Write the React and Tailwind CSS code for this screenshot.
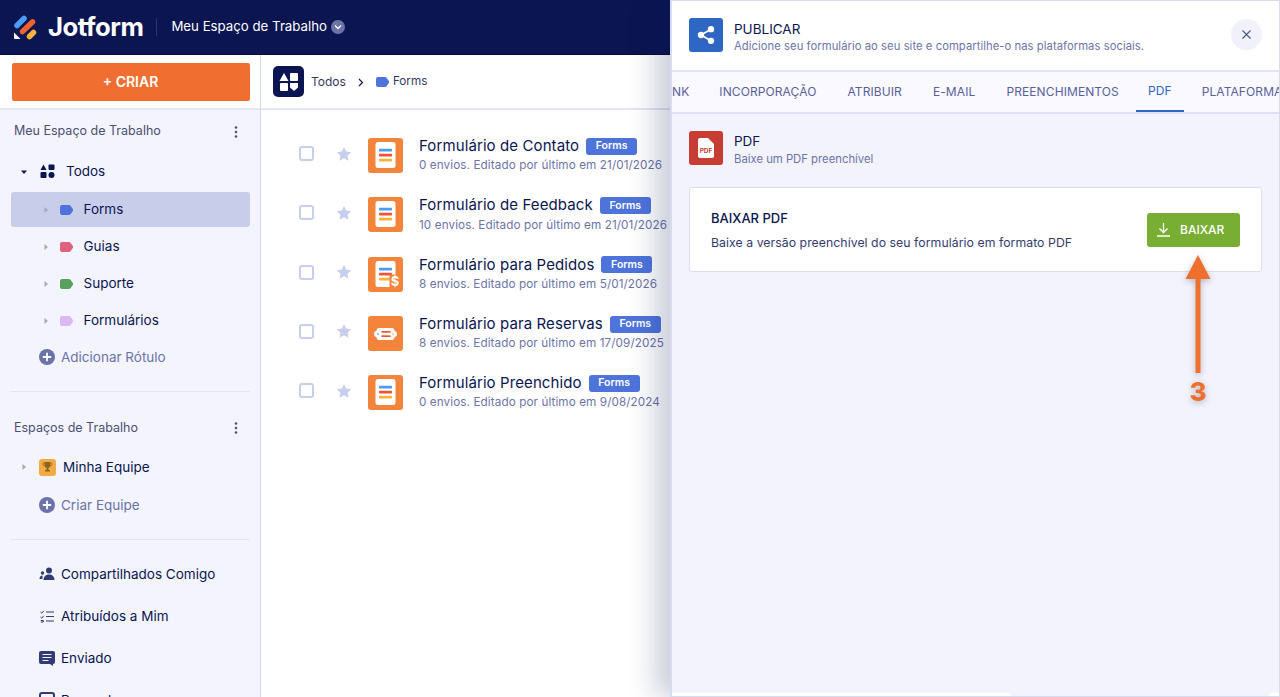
import { X } from 'lucide-react';

const labels = [
  { name: 'Forms', color: 'text-[#4e74dc]', active: true },
  { name: 'Guias', color: 'text-[#e0607e]' },
  { name: 'Suporte', color: 'text-[#58a15f]' },
  { name: 'Formulários', color: 'text-[#dcb8f5]' },
];

const forms = [
  { title: 'Formulário de Contato', meta: '0 envios. Editado por último em 21/01/2026', icon: 'doc' },
  { title: 'Formulário de Feedback', meta: '10 envios. Editado por último em 21/01/2026', icon: 'doc' },
  { title: 'Formulário para Pedidos', meta: '8 envios. Editado por último em 5/01/2026', icon: 'pay' },
  { title: 'Formulário para Reservas', meta: '8 envios. Editado por último em 17/09/2025', icon: 'ticket' },
  { title: 'Formulário Preenchido', meta: '0 envios. Editado por último em 9/08/2024', icon: 'doc' },
];

const tabs = [
  { name: 'NK', className: 'pr-[13px] mr-[4px]' },
  { name: 'INCORPORAÇÃO', className: 'px-[13px] mr-[5px]' },
  { name: 'ATRIBUIR', className: 'px-[13px] mr-[5px]' },
  { name: 'E-MAIL', className: 'px-[13px] mr-[5px]' },
  { name: 'PREENCHIMENTOS', className: 'px-[13px] mr-[4px]' },
  { name: 'PDF', className: 'px-[12px] mr-[5px] text-[#2d66c3] border-b-2 border-[#2d66c3]' },
  { name: 'PLATAFORMAS', className: 'px-[13px]' },
];

function Caret({ open }) {
  return (
    <svg width="8" height="8" viewBox="0 0 8 8" className="shrink-0">
      {open ? <path d="M1 2.500h6L4 6z" fill="#0a1551" /> : <path d="M2.500 1v6L6 4z" fill="#a5a8b8" />}
    </svg>
  );
}

function Tag() {
  return (
    <svg width="13" height="10" viewBox="0 0 13 10" className="block">
      <path d="M2 0h7a2 2 0 0 1 1.500.7L13 4.200a1.300 1.300 0 0 1 0 1.600l-2.500 3.500A2 2 0 0 1 9 10H2a2 2 0 0 1-2-2V2a2 2 0 0 1 2-2z" fill="currentColor" />
    </svg>
  );
}

function Dots() {
  return (
    <svg width="4" height="12" viewBox="0 0 4 12">
      <circle cx="2" cy="1.500" r="1.300" fill="#4c5488" />
      <circle cx="2" cy="6" r="1.300" fill="#4c5488" />
      <circle cx="2" cy="10.500" r="1.300" fill="#4c5488" />
    </svg>
  );
}

function PlusCircle() {
  return (
    <svg width="16" height="16" viewBox="0 0 16 16" className="shrink-0">
      <circle cx="8" cy="8" r="8" fill="#6c73a8" />
      <path d="M8 4.500v7M4.500 8h7" stroke="#fff" strokeWidth="1.800" strokeLinecap="round" />
    </svg>
  );
}

function FormIcon({ kind }) {
  return (
    <div className="w-[35px] h-[35px] rounded-[3px] bg-[#f2843b] flex items-center justify-center shrink-0">
      <svg width="35" height="35" viewBox="0 0 35 35">
        {kind === 'ticket' ? (
          <>
            <path d="M11 12h13c1.200 0 2 .8 2.200 1.800.2 1 1.300 1.700 2.300 2.200.5.3.5 3.700 0 4-1 .5-2.100 1.200-2.300 2.200-.2 1-1 1.800-2.200 1.800H11c-1.200 0-2-.8-2.200-1.800-.2-1-1.300-1.700-2.300-2.200-.5-.3-.5-3.700 0-4 1-.5 2.100-1.200 2.300-2.200.2-1 1-1.800 2.200-1.800z" fill="#fff" />
            <rect x="13.500" y="15" width="9" height="1.700" fill="#f2532e" />
            <rect x="13.500" y="19.300" width="9" height="1.700" fill="#f2532e" />
            <rect x="9.200" y="17.300" width="1.500" height="1.500" fill="#4c9bf5" />
            <rect x="24.300" y="17.300" width="1.500" height="1.500" fill="#f9b13b" />
          </>
        ) : (
          <>
            <rect x="7.500" y="4" width="20" height="26" rx="2.500" fill="#fff" />
            <rect x="11" y="10.800" width="13" height="2.800" rx="0.800" fill="#4c9bf5" />
            <rect x="11" y="15.800" width="13" height="2.800" rx="0.800" fill="#f2532e" />
            <rect x="11" y="20.800" width="13" height="2.800" rx="0.800" fill="#f9b13b" />
            {kind === 'pay' && (
              <>
                <rect x="21.500" y="17.500" width="11" height="14" fill="#f2843b" />
                <text x="22.800" y="29" fontSize="13" fontWeight="700" fill="#fff" fontFamily="Inter, sans-serif">$</text>
              </>
            )}
          </>
        )}
      </svg>
    </div>
  );
}

function FormRow({ form }) {
  return (
    <div className="h-[59.250px] flex items-center">
      <div className="w-[15px] h-[15px] rounded-[3px] border-2 border-[#c8ceed] bg-white shrink-0 ml-[38px]" />
      <svg width="16" height="16" viewBox="0 0 24 24" className="ml-[22px] shrink-0">
        <path d="M12 1.500l3.300 6.900 7.500 1-5.500 5.200 1.400 7.500L12 18.400l-6.700 3.700 1.400-7.500L1.200 9.400l7.500-1z" fill="#c8ceed" />
      </svg>
      <div className="ml-[16px] mt-[4px]"><FormIcon kind={form.icon} /></div>
      <div className="ml-[16px] mt-[4px] min-w-0">
        <div className="flex items-center h-[20px]">
          <span className="text-[15px] tracking-[0.1px] text-[#0a1551] whitespace-nowrap">{form.title}</span>
          <span className="ml-[7px] w-[51px] h-[17px] bg-[#4e74dc] rounded-[3px] text-[10.500px] font-semibold text-white flex items-center justify-center">Forms</span>
        </div>
        <div className="text-[11.700px] tracking-[0.1px] text-[#6c73a8] mt-[1px] whitespace-nowrap">{form.meta}</div>
      </div>
    </div>
  );
}

export default function App() {
  return (
    <div className="relative w-[1280px] h-[697px] overflow-hidden bg-white font-['Inter',sans-serif] text-[#0a1551]">
      {/* Top bar */}
      <header className="h-[55px] bg-[#0a1551] flex items-center pl-[13px] border-b border-[#050c33]">
        <svg width="24" height="26" viewBox="0 0 24 26" fill="none" strokeLinecap="round" strokeWidth="5.500">
          <path d="M4 11.500L11 4.500" stroke="#4c9bf5" />
          <path d="M9.500 17.500L19.500 8" stroke="#f2622e" />
          <path d="M16.500 22.500L20.500 18.500" stroke="#f9b13b" />
          <path d="M1 18.500v5.500a1 1 0 0 0 1 1h5.500z" fill="#fff" />
        </svg>
        <span className="ml-[11px] text-[25.700px] font-bold tracking-[-0.5px] text-white">Jotform</span>
        <div className="w-px h-[18px] bg-[#2a3470] ml-[13px]" />
        <span className="ml-[14px] text-[13.250px] text-white">Meu Espaço de Trabalho</span>
        <div className="ml-[4px] w-[14px] h-[14px] rounded-full bg-[#6c73a8] flex items-center justify-center">
          <svg width="8" height="6" viewBox="0 0 8 6"><path d="M1 1.500l3 3 3-3" stroke="#fff" strokeWidth="1.300" fill="none" /></svg>
        </div>
      </header>

      <div className="flex h-[642px]">
        {/* Sidebar */}
        <aside className="w-[261px] shrink-0 border-r border-[#d5d9f0] bg-[#f3f4fe] overflow-hidden">
          <div className="h-[55px] bg-white border-b-2 border-[#e3e5f5] flex items-center pl-[11.500px]">
            <div className="w-[238px] h-[38px] rounded-[2px] bg-[#f06f30] text-white text-[14px] font-semibold flex items-center justify-center">+ CRIAR</div>
          </div>

          <div className="h-[43px] flex items-center justify-between pl-[14px] pr-[22px]">
            <span className="text-[12.500px] text-[#4c5070]">Meu Espaço de Trabalho</span>
            <Dots />
          </div>

          <div className="h-[37px] flex items-center pl-[20px]">
            <Caret open />
            <svg width="15" height="15" viewBox="0 0 15 15" className="ml-[12px]">
              <path d="M3.500 0.500L6.500 6H0.500z" fill="#0a1551" />
              <rect x="8.500" y="0.500" width="6" height="5.500" rx="1" fill="#0a1551" />
              <rect x="0.500" y="8" width="6" height="6" rx="1" fill="#0a1551" />
              <circle cx="11.500" cy="11" r="3" fill="#0a1551" />
            </svg>
            <span className="ml-[11px] text-[13.500px] text-[#0a1551]">Todos</span>
          </div>

          <div className="flex flex-col mt-[2px]">
            {labels.map((l) => (
              <div key={l.name} className={`mx-[10.500px] h-[35px] mb-[2px] rounded-[3px] flex items-center pl-[31px] ${l.active ? 'bg-[#c8ceea]' : ''}`}>
                <Caret />
                <span className={`ml-[10px] ${l.color}`}><Tag /></span>
                <span className="ml-[11px] text-[13.500px] text-[#0a1551]">{l.name}</span>
              </div>
            ))}
          </div>

          <div className="h-[34px] flex items-center pl-[39px]">
            <PlusCircle />
            <span className="ml-[6px] text-[13.500px] text-[#6c73a8]">Adicionar Rótulo</span>
          </div>

          <div className="mx-[10.500px] mt-[17px] border-t border-[#e3e5f0]" />

          <div className="h-[44px] mt-[14px] flex items-center justify-between pl-[14px] pr-[22px]">
            <span className="text-[12.500px] text-[#4c5070]">Espaços de Trabalho</span>
            <Dots />
          </div>

          <div className="h-[34px] flex items-center pl-[20px]">
            <Caret />
            <div className="ml-[11px] w-[17px] h-[17px] rounded-[3px] bg-[#f2ac43] flex items-center justify-center">
              <svg width="11" height="12" viewBox="0 0 11 12">
                <path d="M2.500 1h6v3a3 3 0 0 1-6 0zM4.500 7h2v2h1.500v1.500H3V9h1.500z" fill="#8a6420" />
                <path d="M2.500 2H1v1.500a1.500 1.500 0 0 0 1.500 1.500M8.500 2H10v1.500A1.500 1.500 0 0 1 8.500 5" stroke="#8a6420" strokeWidth="0.700" fill="none" />
              </svg>
            </div>
            <span className="ml-[7px] text-[13.500px] text-[#0a1551]">Minha Equipe</span>
          </div>

          <div className="h-[42px] flex items-center pl-[39px]">
            <PlusCircle />
            <span className="ml-[6px] text-[13.500px] text-[#6c73a8]">Criar Equipe</span>
          </div>

          <div className="mx-[10.500px] mt-[13px] border-t border-[#e3e5f0]" />

          <div className="mt-[13px] flex flex-col">
            <div className="h-[42px] flex items-center pl-[39px]">
              <svg width="16" height="14" viewBox="0 0 16 14" className="shrink-0">
                <circle cx="10" cy="3.500" r="3" fill="#323b75" />
                <path d="M4.500 13c0-3.500 2.500-5.500 5.500-5.500s5.500 2 5.500 5.500z" fill="#323b75" />
                <circle cx="3.500" cy="6" r="1.700" fill="#323b75" />
                <path d="M0.500 12c0-2 1-3.500 3-3.500v3.500z" fill="#323b75" />
              </svg>
              <span className="ml-[6px] text-[13.500px]">Compartilhados Comigo</span>
            </div>
            <div className="h-[42px] flex items-center pl-[40px]">
              <svg width="14" height="13" viewBox="0 0 14 13" fill="none" className="shrink-0">
                <path d="M0.500 2L1.800 3.200 3.800 0.800M0.500 7L1.800 8.200 3.800 5.800M0.800 10.500h2.500v1.500h-2.500" stroke="#323b75" strokeWidth="1" />
                <path d="M6 2h8M6 6.500h8M6 11h8" stroke="#323b75" strokeWidth="1.200" />
              </svg>
              <span className="ml-[7px] text-[13.500px]">Atribuídos a Mim</span>
            </div>
            <div className="h-[42px] flex items-center pl-[39px]">
              <svg width="16" height="15" viewBox="0 0 16 15" className="shrink-0">
                <path d="M2 0h12a2 2 0 0 1 2 2v9a2 2 0 0 1-2 2v2l-3-2H2a2 2 0 0 1-2-2V2a2 2 0 0 1 2-2z" fill="#323b75" />
                <path d="M3.500 3.500h9M3.500 6.500h9M3.500 9.500h6" stroke="#f3f4fe" strokeWidth="1.100" />
              </svg>
              <span className="ml-[6px] text-[13.500px]">Enviado</span>
            </div>
            <div className="h-[42px] flex items-center pl-[39px]">
              <svg width="16" height="16" viewBox="0 0 16 16" className="shrink-0">
                <rect x="1" y="1" width="14" height="14" rx="2" fill="none" stroke="#323b75" strokeWidth="2" />
              </svg>
              <span className="ml-[6px] text-[13.500px]">Rascunhos</span>
            </div>
          </div>
        </aside>

        {/* Main list */}
        <main className="flex-1 min-w-0 bg-white">
          <div className="h-[55px] border-b-2 border-[#e3e5f5] flex items-center pl-[12px]">
            <div className="w-[31px] h-[31px] rounded-[5px] bg-[#0a1551] flex items-center justify-center">
              <svg width="20" height="20" viewBox="0 0 20 20">
                <path d="M5 1l4.500 8H0.500z" fill="#fff" />
                <rect x="11" y="1" width="8" height="8" rx="1" fill="#fff" />
                <rect x="1" y="11" width="8" height="8" rx="1" fill="#fff" />
                <path d="M11 11h8v4.500L15 19l-4-3.500z" fill="#fff" />
              </svg>
            </div>
            <span className="ml-[7px] mt-[1px] text-[12px] text-[#33395f]">Todos</span>
            <svg width="6" height="9" viewBox="0 0 6 9" className="ml-[12px] mt-[1px]"><path d="M1 1l3.500 3.500L1 8" stroke="#0a1551" strokeWidth="1.200" fill="none" /></svg>
            <span className="ml-[12px] mt-[1px] text-[#4e74dc]"><Tag /></span>
            <span className="ml-[4px] mt-[1px] text-[11.700px] text-[#33395f]">Forms</span>
          </div>
          <div className="pt-[14px]">
            {forms.map((f) => <FormRow key={f.title} form={f} />)}
          </div>
        </main>
      </div>

      {/* Publish drawer */}
      <div className="absolute top-0 right-0 bottom-0 w-[610px] bg-white border-l-2 border-t border-r border-[#d9dbee] shadow-[-14px_0_26px_rgba(10,21,81,0.22)] flex flex-col">
        <div className="h-[71px] shrink-0 flex items-center pl-[17px] pr-[17px] border-b-2 border-[#e3e5f5]">
          <div className="w-[34px] h-[34px] mb-[1px] rounded-[3px] bg-[#2d66c3] flex items-center justify-center">
            <svg width="20" height="20" viewBox="0 0 24 24" fill="#fff">
              <circle cx="18" cy="5" r="3.800" />
              <circle cx="6" cy="12" r="3.800" />
              <circle cx="18" cy="19" r="3.800" />
              <path d="M6 12l12-7M6 12l12 7" stroke="#fff" strokeWidth="2" />
            </svg>
          </div>
          <div className="ml-[11px] flex-1 mt-[3px]">
            <div className="text-[13.500px] leading-[16px] text-[#0a1551]">PUBLICAR</div>
            <div className="text-[11.250px] leading-[16px] tracking-[0.05px] text-[#6c73a8] mt-[1px]">Adicione seu formulário ao seu site e compartilhe-o nas plataformas sociais.</div>
          </div>
          <div className="w-[31px] h-[31px] mb-[3px] rounded-full bg-[#f0f1fb] flex items-center justify-center">
            <X size={15} color="#4c5488" strokeWidth={1.750} />
          </div>
        </div>

        <div className="h-[42px] bg-[#f9f9ff] border-b-2 border-[#dfe1f2] flex items-end overflow-hidden shrink-0">
          <div className="flex h-full whitespace-nowrap text-[12px] tracking-[0.1px] text-[#5a6199]">
            {tabs.map((t) => (
              <div key={t.name} className={`h-full flex items-center ${t.className}`}>{t.name}</div>
            ))}
          </div>
        </div>

        <div className="flex-1 bg-[#f3f3fd] pt-[17px] px-[17px]">
          <div className="flex items-start">
            <div className="w-[34px] h-[34px] rounded-[3px] bg-[#c83d33] flex items-center justify-center">
              <svg width="16" height="20" viewBox="0 0 16 20">
                <path d="M2 0h8l6 6v12a2 2 0 0 1-2 2H2a2 2 0 0 1-2-2V2a2 2 0 0 1 2-2z" fill="#fff" />
                <text x="8" y="15" textAnchor="middle" fontSize="6.500" fontWeight="700" fill="#c83d33" fontFamily="Inter, sans-serif">PDF</text>
              </svg>
            </div>
            <div className="ml-[11px] mt-[2px]">
              <div className="text-[13.500px] leading-[16px]">PDF</div>
              <div className="text-[11.300px] leading-[16px] text-[#6c73a8] mt-[2px]">Baixe um PDF preenchível</div>
            </div>
          </div>

          <div className="mt-[20px] w-[573px] h-[85px] bg-white border border-[#dcdef0] rounded-[3px] flex items-center justify-between pl-[21px] pr-[21px]">
            <div className="mt-[2px]">
              <div className="text-[13px] font-medium leading-[16px]">BAIXAR PDF</div>
              <div className="text-[12.270px] leading-[16px] tracking-[0.05px] text-[#343c6e] mt-[9px]">Baixe a versão preenchível do seu formulário em formato PDF</div>
            </div>
            <div className="relative">
              <div className="w-[93px] h-[34px] rounded-[3px] bg-[#78ae33] text-white text-[12px] font-medium flex items-center pl-[9px] gap-[9px]">
                <svg width="15" height="15" viewBox="0 0 15 15" fill="none" stroke="#fff" strokeWidth="1.300">
                  <path d="M7.500 1v9M3.500 6.500l4 4 4-4M1 14h13" />
                </svg>
                BAIXAR
              </div>
              {/* Annotation arrow */}
              <div className="absolute left-[38px] top-[42px] w-[26px] flex flex-col items-center drop-shadow-[0_2px_3px_rgba(0,0,0,0.25)]">
                <svg width="26" height="118" viewBox="0 0 26 118">
                  <path d="M13 0l12.500 24H15.500v94h-5V24H0.500z" fill="#ee702e" />
                </svg>
                <span className="text-[26px] font-extrabold leading-[30px] mt-[4px] text-[#ee702e]">3</span>
              </div>
            </div>
          </div>
        </div>
        {/* bottom edge of the scroll area */}
        <div className="h-[3px] flex shrink-0">
          <div className="w-[339px] bg-white" />
          <div className="flex-1 bg-[#f3f3fd]" />
          <div className="w-[10px] bg-white" />
        </div>
        <div className="h-[1px] bg-[#d9dbee] shrink-0" />
      </div>
    </div>
  );
}
